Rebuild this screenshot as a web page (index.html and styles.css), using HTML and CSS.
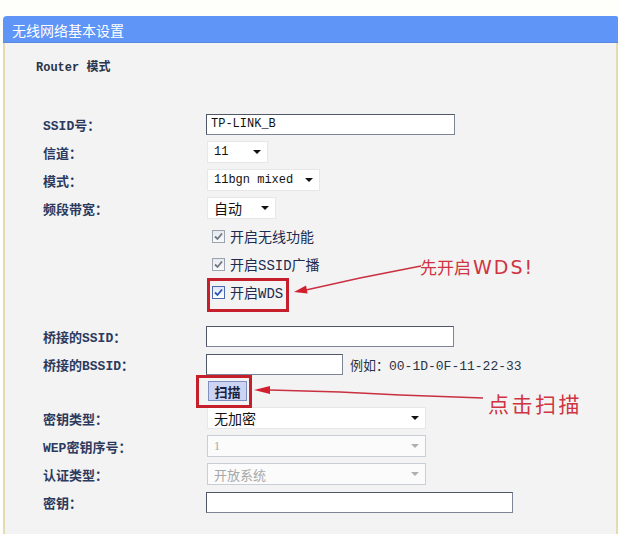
FILE: index.html
```html
<!DOCTYPE html>
<html lang="zh-CN">
<head>
  <meta charset="UTF-8">
  <title>无线网络基本设置</title>
  <link rel="stylesheet" href="styles.css">
</head>
<body>

  <div class="panel">
    <div class="panel-head">无线网络基本设置</div>
    <div class="panel-body">
      <p class="mode">Router 模式</p>

      <div class="form">
        <div class="row">
          <span class="label">SSID号：</span>
          <div class="field"><input class="text w-ssid" type="text" value="TP-LINK_B"></div>
        </div>
        <div class="row">
          <span class="label">信道：</span>
          <div class="field"><span class="sel w-chan">11</span></div>
        </div>
        <div class="row">
          <span class="label">模式：</span>
          <div class="field"><span class="sel w-mode">11bgn mixed</span></div>
        </div>
        <div class="row">
          <span class="label">频段带宽：</span>
          <div class="field"><span class="sel w-band cjk">自动</span></div>
        </div>
        <div class="row">
          <span class="label"></span>
          <div class="field"><label class="cb"><span class="box"><svg viewBox="0 0 11 11"><path d="M2 5.5 L4.5 8 L9 2.5"/></svg></span>开启无线功能</label></div>
        </div>
        <div class="row">
          <span class="label"></span>
          <div class="field"><label class="cb"><span class="box"><svg viewBox="0 0 11 11"><path d="M2 5.5 L4.5 8 L9 2.5"/></svg></span>开启SSID广播</label></div>
        </div>
        <div class="row">
          <span class="label"></span>
          <div class="field"><label class="cb mark mark-wds"><span class="box on"><svg viewBox="0 0 11 11"><path d="M2 5.5 L4.5 8 L9 2.5"/></svg></span>开启WDS</label></div>
        </div>

        <div class="row spaced">
          <span class="label">桥接的SSID：</span>
          <div class="field"><input class="text w-bridge" type="text"></div>
        </div>
        <div class="row">
          <span class="label">桥接的BSSID：</span>
          <div class="field"><input class="text w-bssid" type="text"><span class="hint">例如：00-1D-0F-11-22-33</span></div>
        </div>
        <div class="row short">
          <span class="label"></span>
          <div class="field"><span class="mark mark-scan"><button class="scan" type="button">扫描</button></span></div>
        </div>
        <div class="row">
          <span class="label">密钥类型：</span>
          <div class="field"><span class="sel w-key cjk">无加密</span></div>
        </div>
        <div class="row">
          <span class="label">WEP密钥序号：</span>
          <div class="field"><span class="sel w-key off">1</span></div>
        </div>
        <div class="row">
          <span class="label">认证类型：</span>
          <div class="field"><span class="sel w-key off cjk">开放系统</span></div>
        </div>
        <div class="row">
          <span class="label">密钥：</span>
          <div class="field"><input class="text w-pass" type="text"></div>
        </div>
      </div>
    </div>
  </div>

  <!-- annotations -->
  <div class="notes">
    <svg class="arrows" width="620" height="534" viewBox="0 0 620 534">
      <polyline points="421,266 360,278 306,290"/>
      <polygon points="294,292 307.5,293.5 306,285.5"/>
      <polyline points="270,390 340,392 400,395 483,398"/>
      <polygon points="254,390 270,386 270,394"/>
    </svg>
    <div class="note note-wds">先开启<span class="latin">WDS!</span></div>
    <div class="note note-scan">点击扫描</div>
  </div>

</body>
</html>
```

FILE: styles.css
```css
* {
  box-sizing: border-box;
}

html, body {
  overflow: hidden;
}

body {
  margin: 0;
  height: 534px;
  position: relative;
  background: #fefefa;
  font-family: "Liberation Mono", "Noto Sans CJK SC", monospace;
  font-size: 13px;
  color: #1d2b4f;
}

.panel {
  margin: 16px 2px 0 3px;
}

.panel-head {
  height: 27px;
  padding-left: 9px;
  line-height: 29px;
  background: #5f95f7;
  border-bottom: 1px solid #5a88e0;
  border-radius: 4px 2px 0 0;
  color: #fff;
  font-family: "Noto Sans CJK SC", sans-serif;
  font-size: 14px;
}

.panel-body {
  height: 491px;
  background: #f3f3f3;
  border-left: 2px solid #e4dab4;
  border-right: 2px solid #e4dab4;
  padding-top: 15px;
}

.mode {
  margin: 0 0 32px 31px;
  height: 20px;
  line-height: 20px;
  font-size: 12px;
  font-weight: bold;
  color: #2a3448;
}

.form {
  padding-left: 38px;
}

.row {
  display: grid;
  grid-template-columns: 163px 1fr;
  align-items: center;
  height: 28px;
}

.row.spaced {
  margin-top: 16px;
}

.row.short {
  height: 26px;
}

.label {
  white-space: nowrap;
  font-weight: bold;
  color: #2b3a5e;
}

.field {
  display: flex;
  align-items: center;
}

.text {
  margin: 0;
  height: 21px;
  padding: 0 4px;
  background: #fff;
  border: 1px solid #7d8696;
  border-top-color: #505868;
  border-left-color: #505868;
  font-family: "Liberation Mono", monospace;
  font-size: 12px;
  color: #111;
  outline: none;
}

.w-ssid { width: 249px; }
.w-bridge { width: 248px; }
.w-bssid { width: 137px; }
.w-pass { width: 307px; }

.hint {
  margin-left: 7px;
  color: #2a3448;
}

.sel {
  display: inline-flex;
  align-items: center;
  justify-content: space-between;
  height: 22px;
  margin-left: 1px;
  padding: 0 6px;
  background: #fff;
  border: 1px solid #e7e7e7;
  font-size: 12px;
  color: #111;
}

.sel::after {
  content: '';
  border-left: 4px solid transparent;
  border-right: 4px solid transparent;
  border-top: 4px solid #111;
}

.sel.cjk {
  font-family: "Noto Sans CJK SC", sans-serif;
  font-size: 14px;
}

.sel.off {
  background: #fbfbfb;
  border-color: #c9ced6;
  color: #a8a8a8;
  font-family: "Liberation Serif", serif;
}

.sel.off.cjk {
  font-family: "Noto Sans CJK SC", sans-serif;
  font-size: 13px;
}

.sel.off::after {
  border-top-color: #b0b0b0;
}

.w-chan { width: 61px; }
.w-mode { width: 113px; }
.w-band { width: 69px; }
.w-key { width: 219px; }

.cb {
  display: inline-flex;
  align-items: center;
  height: 16px;
  margin-left: 6px;
  font-size: 14px;
  color: #1d2b4f;
}

.box {
  display: inline-flex;
  width: 13px;
  height: 13px;
  margin-right: 5px;
  background: linear-gradient(#e6e9ee, #fafafa);
  border: 1px solid #9aa3b0;
}

.box svg {
  width: 11px;
  height: 11px;
  fill: none;
  stroke: #6f7785;
  stroke-width: 1.8;
}

.box.on {
  border-color: #4a6ab0;
  background: linear-gradient(#dfe6f5, #fff);
}

.box.on svg {
  stroke: #2c52b4;
}

.scan {
  width: 39px;
  height: 20px;
  margin: 0 0 0 2px;
  padding: 0;
  background: #ccd3f3;
  border: 1px solid #7f8fbf;
  font-family: "Noto Sans CJK SC", sans-serif;
  font-size: 13px;
  font-weight: bold;
  color: #1a2240;
}

/* red annotation frames */
.mark {
  position: relative;
  display: inline-flex;
}

.mark::after {
  content: '';
  position: absolute;
  border: 3px solid #c51f2b;
}

.mark-wds::after {
  left: -5px;
  right: -6px;
  top: -6px;
  bottom: -12px;
}

.mark-scan::after {
  left: -10px;
  right: -5px;
  top: -6px;
  bottom: -7px;
}

.notes {
  position: absolute;
  left: 0;
  top: 0;
  width: 620px;
  height: 534px;
  pointer-events: none;
}

.arrows polyline {
  fill: none;
  stroke: #c93040;
  stroke-width: 1.4;
}

.arrows polygon {
  fill: #d21f2e;
}

.note {
  position: absolute;
  color: #cf3442;
  font-family: "Noto Sans CJK SC", sans-serif;
  white-space: nowrap;
}

.note-wds {
  left: 420px;
  top: 255px;
  font-size: 17px;
  line-height: 24px;
}

.note-wds .latin {
  margin-left: 2px;
  font-family: "DejaVu Sans", sans-serif;
  font-size: 19px;
  letter-spacing: 2px;
}

.note-scan {
  left: 488px;
  top: 390px;
  font-size: 21px;
  line-height: 26px;
  letter-spacing: 2.5px;
}
```
